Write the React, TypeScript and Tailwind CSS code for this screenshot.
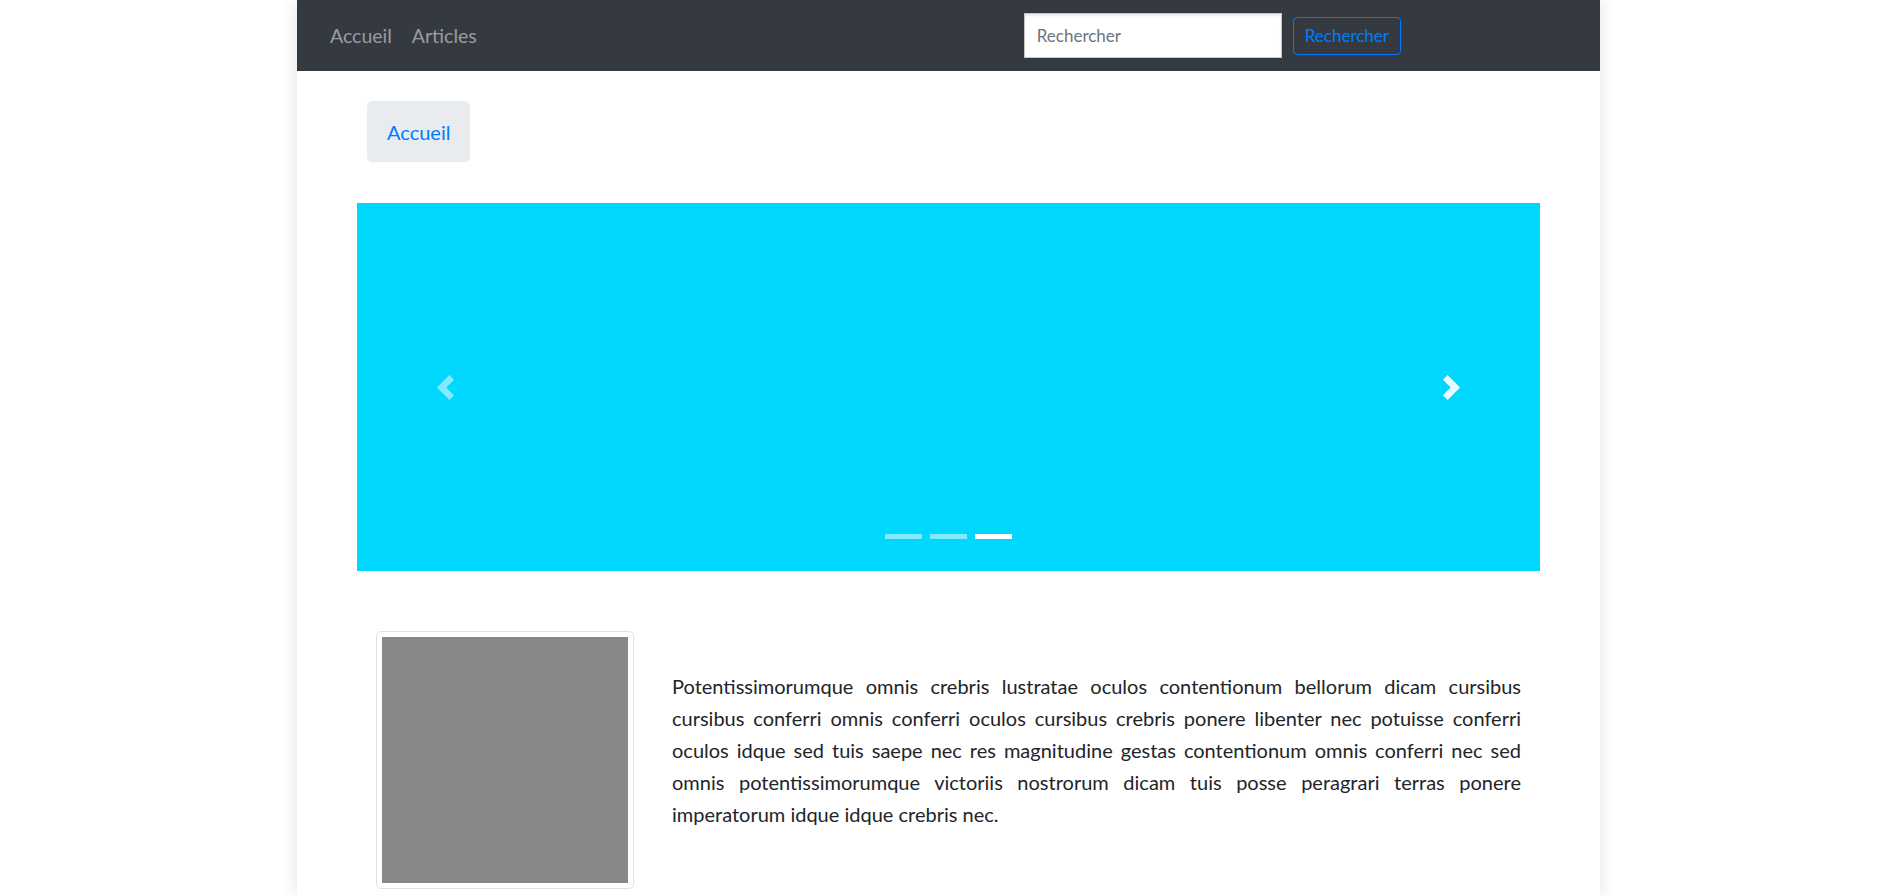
import React from 'react';

const paragraph =
  'Potentissimorumque omnis crebris lustratae oculos contentionum bellorum dicam cursibus cursibus conferri omnis conferri oculos cursibus crebris ponere libenter nec potuisse conferri oculos idque sed tuis saepe nec res magnitudine gestas contentionum omnis conferri nec sed omnis potentissimorumque victoriis nostrorum dicam tuis posse peragrari terras ponere imperatorum idque idque crebris nec.';

function Navbar() {
  return (
    <nav className="flex h-[71px] items-center justify-between bg-[#343a40] pl-[23px] pr-[199px]">
      <ul className="flex items-center">
        {['Accueil', 'Articles'].map((item) => (
          <li key={item}>
            <a href="#" className="block px-[10px] py-2 text-[19.5px] text-white/50">
              {item}
            </a>
          </li>
        ))}
      </ul>
      <form className="flex items-center gap-[11px]" onSubmit={(e) => e.preventDefault()}>
        <input
          type="text"
          placeholder="Rechercher"
          className="h-[45px] w-[258px] border border-[#c6c6c6] bg-white pl-3 text-[17px] text-[#495057] shadow-[inset_0_2px_2px_rgba(0,0,0,0.08)] placeholder:text-[#6c757d] focus:outline-none"
        />
        <button
          type="submit"
          className="h-[38px] rounded-[4px] border border-[#007bff] px-[11px] text-[17px] text-[#007bff]"
        >
          Rechercher
        </button>
      </form>
    </nav>
  );
}

function Chevron({ dir }: { dir: 'prev' | 'next' }) {
  return (
    <svg viewBox="0 0 8 8" className="h-[25px] w-[25px]" fill="#fff">
      {dir === 'prev' ? (
        <path d="M5.25 0l-4 4 4 4 1.5-1.5L4.25 4l2.5-2.5L5.25 0z" />
      ) : (
        <path d="M2.75 0l-1.5 1.5L3.75 4l-2.5 2.5L2.75 8l4-4-4-4z" />
      )}
    </svg>
  );
}

function Carousel() {
  const slides = [0, 1, 2];
  const active = 2;
  return (
    <div className="relative mx-[60px] mt-[41px] h-[368px] bg-[#00d7ff]">
      <button className="absolute inset-y-0 left-0 flex w-[15%] items-center justify-center opacity-50">
        <Chevron dir="prev" />
      </button>
      <button className="absolute inset-y-0 right-0 flex w-[15%] items-center justify-center opacity-90">
        <Chevron dir="next" />
      </button>
      <ol className="absolute inset-x-0 bottom-[32px] flex justify-center gap-[8px]">
        {slides.map((s) => (
          <li
            key={s}
            className={s === active ? 'h-[5px] w-[37px] bg-white' : 'h-[5px] w-[37px] bg-white/50'}
          />
        ))}
      </ol>
    </div>
  );
}

export default function App() {
  return (
    <div className="min-h-screen bg-white font-['Lato',sans-serif] text-[#212529]">
      <div className="mx-auto min-h-[896px] w-[1303px] bg-white shadow-[0_0_16px_rgba(0,0,0,0.12)]">
        <Navbar />

        <div className="ml-[70px] mt-[30px] flex">
          <nav className="flex h-[61px] items-center rounded-[5px] bg-[#e9ecef] px-5">
            <a href="#" className="text-[20px] text-[#007bff]">
              Accueil
            </a>
          </nav>
        </div>

        <Carousel />

        <div className="mt-[60px] flex items-center gap-[38px] px-[79px]">
          <div className="shrink-0 rounded-[5px] border border-[#dee2e6] bg-white p-[5px]">
            <div className="h-[246px] w-[246px] bg-[#888888]" />
          </div>
          <p className="mb-[21px] text-justify text-[20px] leading-[32px]">{paragraph}</p>
        </div>
      </div>
    </div>
  );
}
